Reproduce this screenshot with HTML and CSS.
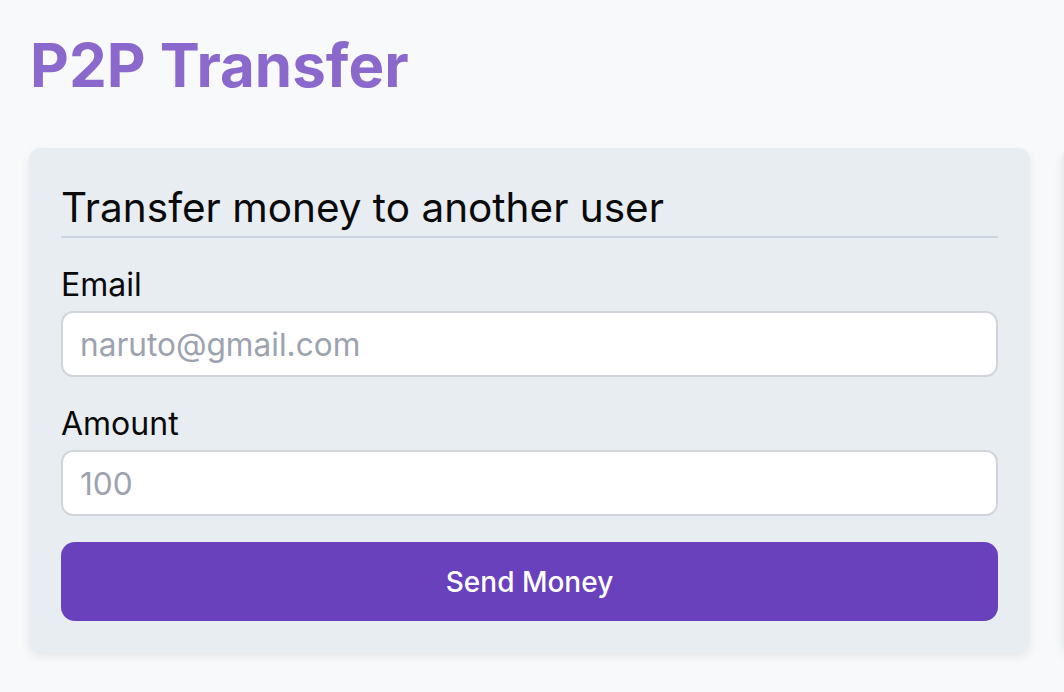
FILE: index.html
```html
<!DOCTYPE html>
<html>
<head>
<meta charset="utf-8">
<link rel="stylesheet" href="styles.css">
</head>
<body>
<div class="page">
  <h1 class="title">P2P Transfer</h1>
  <div class="grid">
    <div class="card">
      <h2 class="card-title">Transfer money to another user</h2>
      <div class="field">
        <label class="label">Email</label>
        <input class="input" type="text" placeholder="naruto@gmail.com">
      </div>
      <div class="field">
        <label class="label">Amount</label>
        <input class="input" type="text" placeholder="100">
      </div>
      <button class="btn">Send Money</button>
    </div>
    <div class="card card-side"></div>
  </div>
</div>
</body>
</html>
```
FILE: styles.css
```css
* { box-sizing: border-box; }
html, body { margin: 0; padding: 0; }
body {
  background: #f8f9fb;
  font-family: Inter, "Noto Sans", sans-serif;
  width: 1064px;
  height: 692px;
  overflow: hidden;
}
.page {
  padding: 20px 0 0 29px;
  width: 1064px;
  height: 692px;
  overflow: hidden;
}
.title {
  margin: 0;
  font-size: 60px;
  font-weight: 700;
  color: #8b68cc;
  line-height: 90px;
  padding-left: 1px;
}
.grid {
  display: grid;
  grid-template-columns: 1001px 1001px;
  gap: 32px;
  margin-top: 38px;
  padding-bottom: 20px;
}
.card {
  background: #e8edf2;
  border-radius: 12px;
  padding: 34px 32px 32px;
  box-shadow: 0 4px 10px rgba(15, 23, 42, 0.08);
}
.card-title {
  margin: 0;
  font-size: 40.5px;
  font-weight: 400;
  color: #0a0a0a;
  line-height: 52px;
  padding-bottom: 2px;
  border-bottom: 2px solid #cbd5e1;
  white-space: nowrap;
}
.field {
  display: flex;
  flex-direction: column;
}
.label {
  font-size: 32px;
  color: #0a0a0a;
  line-height: 40px;
  margin-top: 27px;
  margin-bottom: 6px;
}
.input {
  height: 66px;
  border: 2px solid #d1d5db;
  border-radius: 12px;
  background: #fff;
  padding: 0 17px;
  font-family: Inter, "Noto Sans", sans-serif;
  font-size: 31.6px;
  outline: none;
}
.input::placeholder { color: #9ca3af; }
.btn {
  margin-top: 26px;
  width: 100%;
  height: 79px;
  border: none;
  border-radius: 14px;
  background: #6941bd;
  color: #fff;
  font-family: Inter, "Noto Sans", sans-serif;
  font-size: 28px;
  font-weight: 500;
}
```
